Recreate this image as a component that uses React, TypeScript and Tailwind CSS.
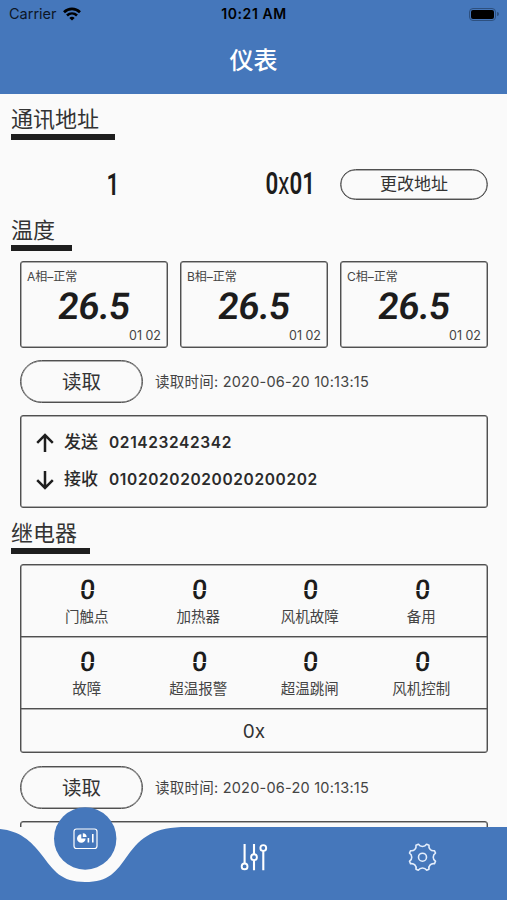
import React from "react";

const phases = ["A", "B", "C"];
const relays = [
  ["门触点", "加热器", "风机故障", "备用"],
  ["故障", "超温报警", "超温跳闸", "风机控制"],
];

function StatusBar() {
  return (
    <div className="grid h-7 grid-cols-3 items-center pl-[9px] pr-2 text-[#0d1626]">
      <div className="flex items-center gap-[6px]">
        <span className="text-[14.5px] leading-7">Carrier</span>
        <svg className="h-[14px] w-[18px]" viewBox="0 0 18 14" fill="none" stroke="#000" strokeWidth="2.7">
          <path d="M1 5.2C5.6.8 12.4.8 17 5.2" />
          <path d="M4 8.5c2.9-2.7 7.1-2.7 10 0" />
          <path d="M9 13.6 6.3 10.9c1.6-1.5 3.8-1.5 5.4 0Z" fill="#000" stroke="none" />
        </svg>
      </div>
      <div className="text-center text-[14px] font-semibold leading-7 tracking-[0.55px] text-black">10:21 AM</div>
      <div className="flex items-center justify-end gap-px">
        <div className="h-[13px] w-[27px] rounded-[4px] border border-[#2d507f] p-px">
          <div className="h-full rounded-[2px] bg-black" />
        </div>
        <div className="h-1 w-[2px] rounded-r bg-[#2d507f]" />
      </div>
    </div>
  );
}

function SectionTitle({ text, bar }: { text: string; bar: string }) {
  return (
    <div className="h-[37px] pl-[11px]">
      <div className="h-[31px] pt-px text-[22px] leading-[31px] text-[#333]">{text}</div>
      <div className={`h-[6px] bg-[#1e1e1e] ${bar}`} />
    </div>
  );
}

function Digit({ value, size }: { value: string; size: "lg" | "sm" }) {
  return (
    <span
      className={
        size === "lg"
          ? "inline-block -skew-x-6 font-['Roboto'] text-[37px] font-semibold leading-[30px] tracking-[-0.6px] text-[#1c1c1c]"
          : "relative ml-[2px] inline-block -skew-x-3 font-['Roboto'] text-[27px] font-medium leading-6 text-[#1c1c1c] after:absolute after:inset-x-0 after:top-[12px] after:h-px after:bg-[#fafafa]"
      }
    >
      {value}
    </span>
  );
}

function ReadRow() {
  return (
    <div className="flex h-[43px] items-center pl-5">
      <button className="h-[43px] w-[123px] rounded-full border border-[#505050] pt-[3px] text-[19.5px] text-[#333] shadow-[inset_0_0_0_0.5px_#606060]">
        读取
      </button>
      <span className="ml-3 pt-px text-[14.5px] tracking-[0.23px] text-[#444]">读取时间: 2020-06-20 10:13:15</span>
    </div>
  );
}

function BottomNav() {
  return (
    <nav className="absolute inset-x-0 bottom-0 h-[93px]">
      <svg className="h-full w-full overflow-visible" viewBox="0 0 507 93" fill="none">
        <path d="M0 20H185C120 21 115 75 85 75C55 75 42 28 0 22Z" fill="#fafafa" />
        <path
          d="M0 22C20 24 31 34 41 47C54 64 61 75 85 75C109 75 116 65 128 48C141 30 154 20 187 20H507V93H0Z"
          fill="#4577bb"
        />
        <circle cx="85.2" cy="31.5" r="31.2" fill="#4577bb" />
        <g stroke="#fff" strokeWidth="1.2">
          <rect x="74" y="22" width="23" height="19.5" rx="2.5" />
          <path d="M81.3 27.2a4.3 4.3 0 1 0 4.3 4.3h-4.3Z" fill="#fff" stroke="none" />
          <path d="M82.8 26.3v3.8h3.8a3.8 3.8 0 0 0-3.8-3.8Z" fill="#fff" stroke="none" />
          <path d="M88.4 31v4.6M92.8 27V35.6" strokeWidth="1.6" />
        </g>
        <g stroke="#fff" strokeWidth="2.1">
          <path d="M244.6 37v19.5M254 37v10.3M254 54v9.3M263.3 44v19.3" />
          <circle cx="244.6" cy="59.4" r="2.9" strokeWidth="1.9" />
          <circle cx="254" cy="50.2" r="2.9" strokeWidth="1.9" />
          <circle cx="263.3" cy="41" r="2.9" strokeWidth="1.9" />
        </g>
        <g stroke="#e4eefc" strokeWidth="1.6" strokeLinejoin="round">
          <circle cx="422.5" cy="50.2" r="4" />
          <path d="M418.4 37.2C420.2 40.2 424.8 40.2 426.6 37.2L429 38.2C428.3 41.6 431.1 44.4 434.5 43.7L435.5 46.1C432.5 47.9 432.5 52.5 435.5 54.3L434.5 56.7C431.1 56 428.3 58.8 429 62.2L426.6 63.2C424.8 60.2 420.2 60.2 418.4 63.2L416 62.2C416.7 58.8 413.9 56 410.5 56.7L409.5 54.3C412.5 52.5 412.5 47.9 409.5 46.1L410.5 43.7C413.9 44.4 416.7 41.6 416 38.2Z" />
        </g>
      </svg>
    </nav>
  );
}

export default function App() {
  return (
    <div className="relative h-[900px] w-[507px] overflow-hidden bg-[#fafafa] font-['Inter','Noto_Sans_CJK_SC',sans-serif]">
      <header className="h-[94px] bg-[#4577bb]">
        <StatusBar />
        <h1 className="text-center text-[24px] font-medium leading-[65px] text-white">仪表</h1>
      </header>
      <main>
        <div className="pt-[9px]">
          <SectionTitle text="通讯地址" bar="w-[104px]" />
        </div>
        <div className="mt-7 flex h-8 items-center text-[31px] font-semibold leading-8 text-[#1c1c1c]">
          <div className="w-[226px] text-center">
            <span className="inline-block scale-x-[0.72] font-['Roboto']">1</span>
          </div>
          <div className="flex w-[128px] justify-center">
            <span className="inline-block scale-x-[0.72] font-['Roboto']">
              0<span className="font-normal">x</span>01
            </span>
          </div>
          <button className="-ml-[14px] h-[31px] w-[148px] rounded-full border border-[#505050] text-[17px] font-normal leading-7 text-[#333] shadow-[inset_0_0_0_0.5px_#606060]">
            更改地址
          </button>
        </div>
        <div className="pt-[14px]">
          <SectionTitle text="温度" bar="w-[61px]" />
        </div>
        <div className="mt-[10px] flex gap-3 pl-5">
          {phases.map((p) => (
            <div
              key={p}
              className="flex h-[87px] w-[148px] shrink-0 flex-col rounded-[3px] border border-[#505050] px-[6px] pt-[6px] shadow-[inset_0_0_0_0.5px_#606060]"
            >
              <div className="text-[12px] leading-[18px] text-[#444]">{p}相–正常</div>
              <div className="flex h-[42px] items-center justify-center">
                <Digit value="26.5" size="lg" />
              </div>
              <div className="text-right text-[12.5px] leading-4 text-[#444]">01 02</div>
            </div>
          ))}
        </div>
        <div className="mt-3">
          <ReadRow />
        </div>
        <div className="ml-5 mt-3 flex h-[93px] w-[468px] flex-col rounded-[3px] border border-[#505050] pl-[14px] pt-[8px] shadow-[inset_0_0_0_0.5px_#606060]">
          {[
            ["发送", "021423242342", "M10 19V2M2.2 9.8 10 2l7.8 7.8"],
            ["接收", "01020202020020200202", "M10 1v17M2.2 10.2 10 18l7.8-7.8"],
          ].map(([label, data, arrow]) => (
            <div key={label} className="flex h-[37px] items-center text-[15.5px] font-semibold text-[#2b2b2b]">
              <svg className="h-5 w-5" viewBox="0 0 20 20" fill="none" stroke="#1e1e1e" strokeWidth="2.5">
                <path d={arrow} />
              </svg>
              <span className="ml-[9px] pt-px text-[17px] font-medium">{label}</span>
              <span className="ml-[11px] tracking-[0.63px]">{data}</span>
            </div>
          ))}
        </div>
        <div className="pt-[9px]">
          <SectionTitle text="继电器" bar="w-[79px]" />
        </div>
        <div className="ml-5 mt-[10px] h-[189px] w-[468px] rounded-[3px] border border-[#505050] shadow-[inset_0_0_0_0.5px_#606060]">
          {relays.map((row) => (
            <div
              key={row[0]}
              className="grid h-[72px] grid-cols-4 border-b border-[#505050] px-[10px] text-center shadow-[0_0.5px_0_0_#606060]"
            >
              {row.map((name) => (
                <div key={name} className="pt-[13px]">
                  <div className="h-6">
                    <Digit value="0" size="sm" />
                  </div>
                  <div className="mt-[4px] text-[14.5px] leading-[22px] text-[#444]">{name}</div>
                </div>
              ))}
            </div>
          ))}
          <div className="text-center text-[19px] leading-[45px] text-[#333]">0x</div>
        </div>
        <div className="mt-[13px]">
          <ReadRow />
        </div>
        <div className="ml-5 mt-3 h-[93px] w-[468px] rounded-[3px] border border-[#505050] shadow-[inset_0_0_0_0.5px_#606060]" />
      </main>
      <BottomNav />
    </div>
  );
}
